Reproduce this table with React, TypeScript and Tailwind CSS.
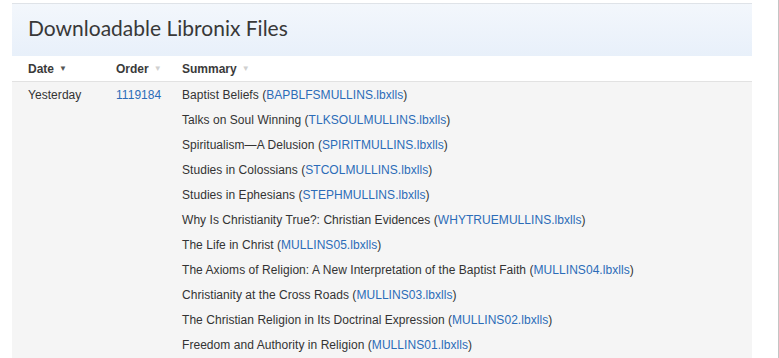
import React from "react";

const rows: { title: string; file: string }[] = [
  { title: "Baptist Beliefs", file: "BAPBLFSMULLINS.lbxlls" },
  { title: "Talks on Soul Winning", file: "TLKSOULMULLINS.lbxlls" },
  { title: "Spiritualism\u2014A Delusion", file: "SPIRITMULLINS.lbxlls" },
  { title: "Studies in Colossians", file: "STCOLMULLINS.lbxlls" },
  { title: "Studies in Ephesians", file: "STEPHMULLINS.lbxlls" },
  { title: "Why Is Christianity True?: Christian Evidences", file: "WHYTRUEMULLINS.lbxlls" },
  { title: "The Life in Christ", file: "MULLINS05.lbxlls" },
  { title: "The Axioms of Religion: A New Interpretation of the Baptist Faith", file: "MULLINS04.lbxlls" },
  { title: "Christianity at the Cross Roads", file: "MULLINS03.lbxlls" },
  { title: "The Christian Religion in Its Doctrinal Expression", file: "MULLINS02.lbxlls" },
  { title: "Freedom and Authority in Religion", file: "MULLINS01.lbxlls" },
];

export default function App() {
  return (
    <div
      className="flex h-[358px] w-[779px] overflow-hidden bg-white"
      style={{ fontFamily: '"Liberation Sans", Arial, sans-serif' }}
    >
      <div className="w-[778px] pl-[12px] pt-[3px]">
        <div className="w-[740px]">
          <div className="h-[53px] border-t border-[#dfe3e8] bg-gradient-to-b from-[#f3f7fc] to-[#e8f0fa] pl-[16px] pt-[10px]">
            <h1
              className="text-[21px] leading-[28px] text-[#383838]"
              style={{ fontFamily: '"Lato", "Open Sans", sans-serif' }}
            >
              Downloadable Libronix Files
            </h1>
          </div>
          <div className="flex h-[26px] items-center border-b border-[#e2e2e2] bg-white text-[12px] font-bold text-[#3a3a3a]">
            <div className="flex w-[104px] items-center pl-[16px]">
              Date <span className="ml-[5px] text-[8px] text-[#555]">▼</span>
            </div>
            <div className="flex w-[66px] items-center">
              Order <span className="ml-[5px] text-[8px] text-[#d0d0d0]">▼</span>
            </div>
            <div className="flex items-center">
              Summary <span className="ml-[5px] text-[8px] text-[#d0d0d0]">▼</span>
            </div>
          </div>
          <div className="flex bg-[#f5f5f5] pt-[1px] text-[12px] tracking-[0.05px] text-[#333]">
            <div className="w-[104px] pl-[16px] leading-[25px]">Yesterday</div>
            <div className="w-[66px] leading-[25px] text-[#2b6cb8]">1119184</div>
            <div className="flex flex-col">
              {rows.map((r) => (
                <div key={r.file} className="h-[25px] leading-[25px] whitespace-nowrap">
                  {r.title} (<span className="text-[#2b6cb8]">{r.file}</span>)
                </div>
              ))}
            </div>
          </div>
        </div>
      </div>
      <div className="h-full w-px bg-[#c4c4c4]" />
    </div>
  );
}
